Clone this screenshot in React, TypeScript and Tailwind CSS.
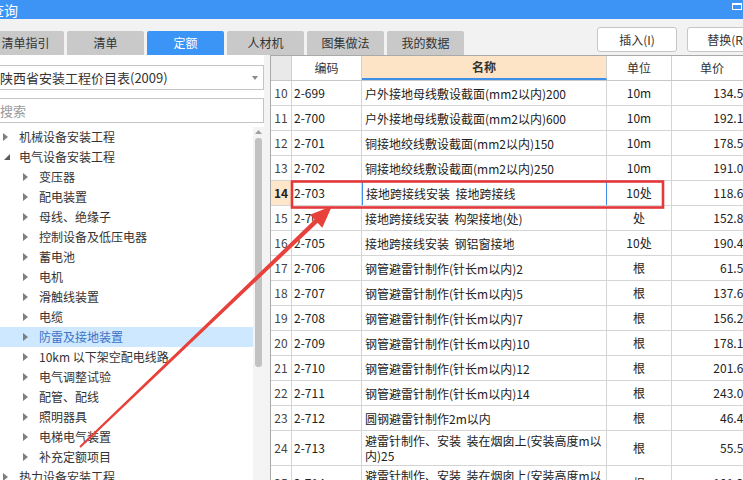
import React from "react";

type TreeItem = { level: number; label: string; open?: boolean; selected?: boolean };

const tree: TreeItem[] = [
  { level: 0, label: "机械设备安装工程" },
  { level: 0, label: "电气设备安装工程", open: true },
  { level: 1, label: "变压器" },
  { level: 1, label: "配电装置" },
  { level: 1, label: "母线、绝缘子" },
  { level: 1, label: "控制设备及低压电器" },
  { level: 1, label: "蓄电池" },
  { level: 1, label: "电机" },
  { level: 1, label: "滑触线装置" },
  { level: 1, label: "电缆" },
  { level: 1, label: "防雷及接地装置", selected: true },
  { level: 1, label: "10km 以下架空配电线路" },
  { level: 1, label: "电气调整试验" },
  { level: 1, label: "配管、配线" },
  { level: 1, label: "照明器具" },
  { level: 1, label: "电梯电气装置" },
  { level: 1, label: "补充定额项目" },
  { level: 0, label: "热力设备安装工程" },
];

const rows = [
  { no: 10, code: "2-699", name: ["户外接地母线敷设截面(mm2以内)200"], unit: "10m", price: "134.56" },
  { no: 11, code: "2-700", name: ["户外接地母线敷设截面(mm2以内)600"], unit: "10m", price: "192.14" },
  { no: 12, code: "2-701", name: ["铜接地绞线敷设截面(mm2以内)150"], unit: "10m", price: "178.52" },
  { no: 13, code: "2-702", name: ["铜接地绞线敷设截面(mm2以内)250"], unit: "10m", price: "191.08" },
  { no: 14, code: "2-703", name: ["接地跨接线安装  接地跨接线"], unit: "10处", price: "118.63" },
  { no: 15, code: "2-704", name: ["接地跨接线安装  构架接地(处)"], unit: "处", price: "152.83" },
  { no: 16, code: "2-705", name: ["接地跨接线安装  钢铝窗接地"], unit: "10处", price: "190.47" },
  { no: 17, code: "2-706", name: ["钢管避雷针制作(针长m以内)2"], unit: "根", price: "61.52" },
  { no: 18, code: "2-707", name: ["钢管避雷针制作(针长m以内)5"], unit: "根", price: "137.64" },
  { no: 19, code: "2-708", name: ["钢管避雷针制作(针长m以内)7"], unit: "根", price: "156.25" },
  { no: 20, code: "2-709", name: ["钢管避雷针制作(针长m以内)10"], unit: "根", price: "178.11" },
  { no: 21, code: "2-710", name: ["钢管避雷针制作(针长m以内)12"], unit: "根", price: "201.63" },
  { no: 22, code: "2-711", name: ["钢管避雷针制作(针长m以内)14"], unit: "根", price: "243.07" },
  { no: 23, code: "2-712", name: ["圆钢避雷针制作2m以内"], unit: "根", price: "46.48" },
  { no: 24, code: "2-713", name: ["避雷针制作、安装  装在烟囱上(安装高度m以", "内)25"], unit: "根", price: "55.53" },
  { no: 25, code: "2-714", name: ["避雷针制作、安装  装在烟囱上(安装高度m以", "内)50"], unit: "根", price: "101.25" },
];

const tabs = ["清单指引", "清单", "定额", "人材机", "图集做法", "我的数据"];

const cols = "grid grid-cols-[21px_70px_245px_65px_80px]";

export default function App() {
  return (
    <div className="relative w-[743px] h-[480px] overflow-hidden bg-white font-['Noto_Sans_CJK_SC',sans-serif] text-[#333]">
      {/* Title bar */}
      <div className="h-[19px] bg-[#3d94f5] flex items-center justify-between">
        <span className="-ml-[10px] text-[14px] leading-none text-white">查询</span>
        <div className="mb-[7px] mr-[1px] w-[10px] h-[7px] border border-white border-t-2 bg-[#3d94f5]" />
      </div>

      {/* Tabs + buttons */}
      <div className="h-[36px] bg-[#f2f2f2] flex overflow-hidden">
        <div className="shrink-0 w-[610px] -ml-[13px] flex items-end gap-[3px]">
          {tabs.map((t) => (
            <div
              key={t}
              className={`w-[77px] h-[24px] rounded-t-[2px] flex items-center justify-center text-[12px] ${
                t === "定额" ? "bg-[#3b95f6] text-white" : "bg-[#c9c9c9] text-[#333]"
              }`}
            >
              {t}
            </div>
          ))}
        </div>
        <div className="shrink-0 flex gap-[10px] pt-[8px]">
          <div className="w-[80px] h-[25px] border border-[#c6c6c6] rounded-[3px] bg-white flex items-center justify-center text-[12px]">
            插入(I)
          </div>
          <div className="w-[80px] h-[25px] border border-[#c6c6c6] rounded-[3px] bg-white flex items-center justify-center text-[12px]">
            替换(R)
          </div>
        </div>
      </div>

      {/* Main */}
      <div className="flex h-[425px]">
        {/* Left panel */}
        <div className="w-[264px] shrink-0 flex flex-col pt-[10px] bg-white">
          <div className="w-[266px] -ml-[2px] h-[25px] border border-[#c4c4c4] flex items-center justify-between pl-[1px] pr-[5px] text-[13px]">
            <span>陕西省安装工程价目表(2009)</span>
            <svg width="6" height="4" viewBox="0 0 6 4">
              <polygon points="0,0 6,0 3,4" fill="#8a8a8a" />
            </svg>
          </div>
          <div className="w-[266px] -ml-[2px] mt-[8px] h-[25px] border border-[#c4c4c4] flex items-center pl-[1px] text-[13px] text-[#9a9a9a]">
            搜索
          </div>
          <div className="mt-[4px] flex-1 flex min-h-0">
            <div className="flex-1 flex flex-col">
              {tree.map((it) => (
                <div
                  key={it.label}
                  className={`h-[20px] shrink-0 flex items-center text-[12px] ${
                    it.level === 0 ? "pl-[3px]" : "pl-[23px]"
                  } ${it.selected ? "bg-[#cde8ff] text-[#3b73c7]" : ""}`}
                >
                  <span className="w-[16px] flex items-center">
                    {it.open ? (
                      <svg width="6" height="6" viewBox="0 0 6 6" className="ml-[1px]">
                        <polygon points="6,0 6,6 0,6" fill="#5a5a5a" />
                      </svg>
                    ) : (
                      <svg width="5" height="8" viewBox="0 0 5 8">
                        <polygon points="0,0 5,4 0,8" fill="#7e7e7e" />
                      </svg>
                    )}
                  </span>
                  <span className="whitespace-nowrap">{it.label}</span>
                </div>
              ))}
            </div>
            <div className="w-[11px] bg-[#f4f4f4] flex flex-col items-center pt-[3px]">
              <svg width="7" height="4" viewBox="0 0 7 4">
                <polygon points="0,4 3.5,0 7,4" fill="#a0a0a0" />
              </svg>
              <div className="mt-[4px] w-[7px] h-[229px] rounded-[3px] bg-[#c2c2c2]" />
            </div>
          </div>
        </div>

        {/* Splitter */}
        <div className="w-[6px] shrink-0 bg-[#f3f3f3]" />

        {/* Grid */}
        <div className="flex-1 min-w-0 overflow-hidden border-l border-t border-[#a9a9a9] text-[12px]">
          <div className={`${cols} h-[25px] border-b border-[#c8c8c8] w-[481px]`}>
            <div className="bg-[#e9e9e9] border-r border-[#d0d0d0]" />
            <div className="bg-white border-r border-[#d0d0d0] flex items-center justify-center text-[12px]">编码</div>
            <div className="bg-[#fde4c6] border-r border-[#d0d0d0] border-b-2 border-b-[#3d8fe8] flex items-center justify-center font-bold text-[12px]">
              名称
            </div>
            <div className="bg-white border-r border-[#d0d0d0] flex items-center justify-center">单位</div>
            <div className="bg-white flex items-center justify-center">单价</div>
          </div>
          {rows.map((r) => {
            const sel = r.no === 14;
            const tall = r.name.length > 1;
            return (
              <div
                key={r.no}
                className={`${cols} w-[481px] border-b border-[#d5d5d5] ${tall ? "h-[35px]" : "h-[25px]"}`}
              >
                <div
                  className={`border-r border-[#d5d5d5] flex items-center justify-center ${
                    sel ? "bg-[#fde6ca] font-bold text-[#222]" : "bg-white text-[#444]"
                  }`}
                >
                  {r.no}
                </div>
                <div className="border-r border-[#d5d5d5] flex items-center pl-[2px] text-[#222]">{r.code}</div>
                <div
                  className={`border-r flex flex-col justify-center pl-[3px] leading-[15px] text-[#222] ${
                    sel ? "border-l border-[#3d8fe8]" : "border-[#d5d5d5]"
                  }`}
                >
                  {r.name.map((l) => (
                    <span key={l} className="whitespace-pre">
                      {l}
                    </span>
                  ))}
                </div>
                <div className="border-r border-[#d5d5d5] flex items-center justify-center text-[#222]">{r.unit}</div>
                <div className="flex items-center justify-end pr-[2px] text-[#222]">{r.price}</div>
              </div>
            );
          })}
        </div>
      </div>

      {/* Annotation */}
      <svg className="absolute inset-0 pointer-events-none" width="743" height="480" viewBox="0 0 743 480">
        <rect x="292" y="181.5" width="371" height="26" fill="none" stroke="#e3393a" strokeWidth="2.6" />
        <polygon
          points="80.7,447.7 317.6,222.8 322.3,227.7 332,206 309.9,214.7 314.6,219.6 79.3,446.3"
          fill="#e8403b"
        />
      </svg>
    </div>
  );
}
